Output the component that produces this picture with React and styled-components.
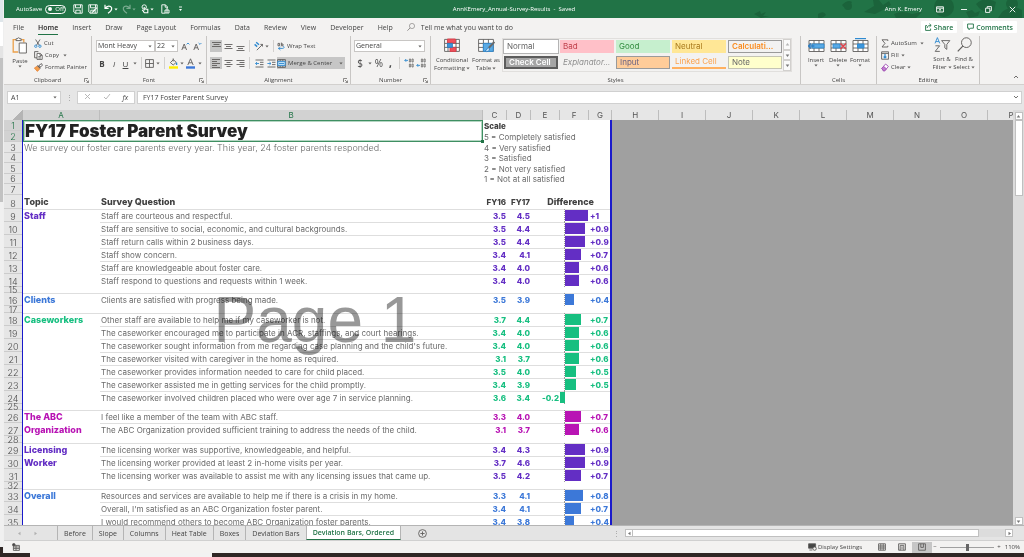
// libraries
import React from 'react';
import styled, { createGlobalStyle, css } from 'styled-components';

// tokens
const uiFont = "'Open Sans', 'Noto Sans', sans-serif";
const sheetFont = "Inter, 'Open Sans', sans-serif";

const color = {
  green: '#217346',
  darkGreen: '#1b633b',
  ribbon: '#f3f2f1',
  chrome: '#e6e6e6',
  line: '#c8c6c4',
  text: '#444444',
  pressed: '#c6c6c6',
  pageBlue: '#1a1acb',
  canvas: '#a0a0a0',
  icon: '#605e5c',
  iconBlue: '#2f8ad0',
};

const topicColor = {
  purple: '#632ec4',
  blue: '#3c78d8',
  green: '#17bf80',
  magenta: '#b814b4',
};

// data
const menuTabs = [
  'File',
  'Home',
  'Insert',
  'Draw',
  'Page Layout',
  'Formulas',
  'Data',
  'Review',
  'View',
  'Developer',
  'Help',
];

const cellStyles = [
  { name: 'Normal', variant: 'normal' },
  { name: 'Bad', variant: 'bad' },
  { name: 'Good', variant: 'good' },
  { name: 'Neutral', variant: 'neutral' },
  { name: 'Calculati...', variant: 'calculation' },
  { name: 'Check Cell', variant: 'check' },
  { name: 'Explanator...', variant: 'explanatory' },
  { name: 'Input', variant: 'input' },
  { name: 'Linked Cell', variant: 'linked' },
  { name: 'Note', variant: 'note' },
];

const columns = [
  { name: 'A', width: 77, selected: true },
  { name: 'B', width: 383, selected: true },
  { name: 'C', width: 24 },
  { name: 'D', width: 24 },
  { name: 'E', width: 29 },
  { name: 'F', width: 29 },
  { name: 'G', width: 23 },
  ...'HIJKLMNOP'.split('').map((name) => ({ name, width: 47 })),
];

const scaleRows = [
  { row: 4, height: 10, text: '3 = Satisfied' },
  { row: 5, height: 11, text: '2 = Not very satisfied' },
  { row: 6, height: 10, text: '1 = Not at all satisfied' },
  { row: 7, height: 11, text: '' },
];

// each question: text, FY16, FY17, difference
const topics = [
  {
    start: 9,
    names: ['Staff'],
    tone: 'purple',
    gap: 6,
    questions: [
      ['Staff are courteous and respectful.', '3.5', '4.5', 1],
      ['Staff are sensitive to social, economic, and cultural backgrounds.', '3.5', '4.4', 0.9],
      ['Staff return calls within 2 business days.', '3.5', '4.4', 0.9],
      ['Staff show concern.', '3.4', '4.1', 0.7],
      ['Staff are knowledgeable about foster care.', '3.4', '4.0', 0.6],
      ['Staff respond to questions and requests within 1 week.', '3.4', '4.0', 0.6],
    ],
  },
  {
    start: 16,
    names: ['Clients'],
    tone: 'blue',
    gap: 7,
    questions: [['Clients are satisfied with progress being made.', '3.5', '3.9', 0.4]],
  },
  {
    start: 18,
    names: ['Caseworkers'],
    tone: 'green',
    gap: 6,
    questions: [
      ['Other staff are available to help me if my caseworker is not.', '3.7', '4.4', 0.7],
      ['The caseworker encouraged me to participate in ACR, staffings, and court hearings.', '3.4', '4.0', 0.6],
      ["The caseworker sought information from me regarding case planning and the child's future.", '3.4', '4.0', 0.6],
      ['The caseworker visited with caregiver in the home as required.', '3.1', '3.7', 0.6],
      ['The caseworker provides information needed to care for child placed.', '3.5', '4.0', 0.5],
      ['The caseworker assisted me in getting services for the child promptly.', '3.4', '3.9', 0.5],
      ['The caseworker involved children placed who were over age 7 in service planning.', '3.6', '3.4', -0.2],
    ],
  },
  {
    start: 26,
    names: ['The ABC', 'Organization'],
    tone: 'magenta',
    gap: 7,
    questions: [
      ['I feel like a member of the team with ABC staff.', '3.3', '4.0', 0.7],
      ['The ABC Organization provided sufficient training to address the needs of the child.', '3.1', '3.7', 0.6],
    ],
  },
  {
    start: 29,
    names: ['Licensing', 'Worker'],
    tone: 'purple',
    gap: 7,
    questions: [
      ['The licensing worker was supportive, knowledgeable, and helpful.', '3.4', '4.3', 0.9],
      ['The licensing worker provided at least 2 in-home visits per year.', '3.7', '4.6', 0.9],
      ['The licensing worker was available to assist me with any licensing issues that came up.', '3.5', '4.2', 0.7],
    ],
  },
  {
    start: 33,
    names: ['Overall'],
    tone: 'blue',
    gap: 0,
    questions: [
      ['Resources and services are available to help me if there is a crisis in my home.', '3.3', '4.1', 0.8],
      ["Overall, I'm satisfied as an ABC Organization foster parent.", '3.4', '4.1', 0.7],
      ['I would recommend others to become ABC Organization foster parents.', '3.4', '3.8', 0.4],
    ],
  },
];

const sheetTabs = [
  'Before',
  'Slope',
  'Columns',
  'Heat Table',
  'Boxes',
  'Deviation Bars',
  'Deviation Bars, Ordered',
];

const GlobalStyle = createGlobalStyle`
  *, *::before, *::after {
    box-sizing: border-box;
  }
  body {
    margin: 0;
    background: ${color.chrome};
    color: ${color.text};
    font: 7px/9px ${uiFont};
    overflow: hidden;
  }
  button, input, select {
    margin: 0;
    padding: 0;
    border: 0;
    border-radius: 0;
    background: none;
    color: inherit;
    font: inherit;
  }
`;

// shell
const Desktop = styled.div`
  display: flex;
  flex-direction: column;
  height: 100vh;
`;

const Main = styled.div`
  display: flex;
  flex: 1;
  min-height: 0;
`;

const Behind = styled.div`
  flex: 0 0 4px;
  border-right: 1px solid #efefef;
  background: linear-gradient(
    #dfe6ea 0 22px,
    #ffffff 22px 46px,
    #e4e4e4 46px 58px,
    #c2c2c2 58px 202px,
    #f0f0f0 202px calc(100% - 6px),
    #2f2725 calc(100% - 6px)
  );
`;

const Window = styled.div`
  display: flex;
  flex: 1;
  flex-direction: column;
  min-width: 0;
`;

const Taskbar = styled.div`
  display: flex;
  flex: 0 0 4px;
  padding-left: 30px;
  background: #2f2725;
`;

const TaskSearch = styled.div`
  flex: 0 0 182px;
  background: #f2f2f2;
`;

// title bar
const TitleBar = styled.header`
  position: relative;
  display: grid;
  grid-template-columns: 1fr auto 1fr;
  align-items: center;
  flex: 0 0 18px;
  background: ${color.green};
  color: #ffffff;
  font-size: 6px;
`;

const TitleArt = styled.svg`
  position: absolute;
  top: 0;
  right: 0;
  width: 280px;
  height: 18px;
  fill: ${color.darkGreen};
`;

const QuickAccess = styled.div`
  display: flex;
  align-items: center;
  gap: 3px;
  padding-left: 12px;
`;

const Toggle = styled.label`
  display: flex;
  align-items: center;
  gap: 3px;
  margin-right: 3px;
`;

const ToggleTrack = styled.span`
  display: flex;
  align-items: center;
  gap: 3px;
  width: 21px;
  height: 9px;
  padding-left: 2px;
  border: 1px solid #ffffff;
  border-radius: 5px;
  line-height: 7px;

  &::before {
    width: 4px;
    height: 4px;
    border-radius: 50%;
    background: #ffffff;
    content: '';
  }
`;

const HiddenBox = styled.input`
  position: absolute;
  opacity: 0;
`;

const WindowActions = styled.div`
  position: relative;
  display: flex;
  align-items: center;
  justify-content: flex-end;
  gap: 12px;
  padding-right: 6px;
`;

const BarButton = styled.button`
  display: flex;
  align-items: center;
  justify-content: center;
  gap: 1px;
  height: 12px;
  min-width: ${(props) => props.$width || 12}px;
  opacity: ${(props) => (props.disabled ? 0.4 : 1)};
`;

// ribbon
const MenuBar = styled.nav`
  display: flex;
  flex: 0 0 18px;
  align-items: center;
  gap: 14px;
  padding: 0 7px 0 9px;
  background: ${color.ribbon};
`;

const MenuTab = styled.a`
  padding: 3px 0 2px;
  border-bottom: 1px solid ${(props) => (props.$active ? color.green : 'transparent')};
  color: ${(props) => (props.$active ? '#252423' : color.text)};
  font-weight: ${(props) => (props.$active ? 600 : 400)};
  text-decoration: none;
  white-space: nowrap;
`;

const TellMe = styled.label`
  display: flex;
  flex: 1;
  align-items: center;
  gap: 6px;
`;

const TellMeInput = styled.input`
  width: 100px;

  &::placeholder {
    color: ${color.text};
    opacity: 1;
  }
`;

const TopButton = styled.button`
  display: flex;
  align-items: center;
  gap: 2px;
  height: 12px;
  margin-left: ${(props) => (props.$tight ? '-8px' : '0')};
  padding: 0 4px;
  border-radius: 1px;
  background: #ffffff;
  color: ${color.green};
  font-weight: 600;
`;

const Ribbon = styled.div`
  display: flex;
  flex: 0 0 49px;
  border-bottom: 1px solid #d2d0ce;
  background: ${color.ribbon};
  font-size: 6px;
`;

const GroupBox = styled.section`
  position: relative;
  display: flex;
  flex-direction: column;
  min-width: ${(props) => props.$width}px;
  border-right: 1px solid ${color.line};
`;

const GroupBody = styled.div`
  display: flex;
  flex: 1;
  flex-direction: ${(props) => (props.$stack ? 'column' : 'row')};
  gap: ${(props) => props.$gap || 0}px;
  padding: ${(props) => props.$padding || '2px 4px 0'};
`;

const GroupLabel = styled.h2`
  margin: 0;
  font-size: 6px;
  font-weight: 400;
  line-height: 8px;
  text-align: center;
`;

const Launcher = styled.button`
  position: absolute;
  right: 2px;
  bottom: 1px;
  display: flex;
`;

const ToolRow = styled.div`
  display: flex;
  align-items: center;
  height: 12px;
`;

const ToolColumn = styled.div`
  display: flex;
  flex-direction: column;
`;

const Tool = styled.button`
  display: flex;
  align-items: center;
  justify-content: ${(props) => (props.$label ? 'flex-start' : 'center')};
  gap: 2px;
  min-width: ${(props) => props.$width || 12}px;
  height: 12px;
  background: ${(props) => (props.$pressed ? color.pressed : 'none')};
  white-space: nowrap;
`;

const Glyph = styled.span`
  font-size: ${(props) => props.$size || 10}px;
`;

const BigTool = styled.button`
  display: flex;
  flex-direction: column;
  align-items: center;
  justify-content: flex-start;
  min-width: ${(props) => props.$width || 22}px;
  line-height: 8px;
  white-space: nowrap;

  svg:first-child {
    margin-bottom: 3px;
  }
`;

const BigLabel = styled.span`
  display: flex;
  align-items: center;

  svg:last-child {
    margin: 0 0 0 1px;
  }
`;

const Divider = styled.span`
  width: 1px;
  height: 12px;
  margin: 0 3px;
  background: #d2d0ce;
`;

const SelectBox = styled.span`
  position: relative;
  display: flex;
  width: ${(props) => props.$width}px;
  height: 12px;
  border: 1px solid ${color.line};
  background: #ffffff;
  font-size: 7px;

  svg {
    position: absolute;
    top: 4px;
    right: 2px;
    pointer-events: none;
  }
`;

const Select = styled.select`
  width: 100%;
  padding-left: 1px;
  appearance: none;
  line-height: 10px;
`;

const Gallery = styled.div`
  display: flex;
  height: 34px;
  border: 1px solid #e1dfdd;
`;

const GalleryGrid = styled.div`
  display: grid;
  grid-template-columns: repeat(5, 54px);
  grid-auto-rows: 13px;
  gap: 3px 2px;
  padding: 1px;
`;

const variants = {
  normal: css`
    outline: 1px solid #b4b4b4;
    background: #ffffff;
  `,
  bad: css`
    background: #ffc0c8;
    color: #c0404c;
  `,
  good: css`
    background: #c6efce;
    color: #2f8a3c;
  `,
  neutral: css`
    background: #ffe796;
    color: #a97a1c;
  `,
  calculation: css`
    border: 1px solid #9a9a9a;
    background: #f2f2f2;
    color: #fa8b1e;
    font-weight: 600;
  `,
  check: css`
    border: 2px solid #5c5c5c;
    background: #a5a5a5;
    color: #ffffff;
    font-weight: 600;
  `,
  explanatory: css`
    color: #8f8f8f;
    font-style: italic;
  `,
  input: css`
    border: 1px solid #9a9a9a;
    background: #ffcc99;
    color: #6a6282;
  `,
  linked: css`
    border-bottom: 2px solid #ffb060;
    color: #fba24e;
  `,
  note: css`
    border: 1px solid #c4c4b4;
    background: #ffffcc;
  `,
};

const StyleItem = styled.button`
  overflow: hidden;
  padding-left: 3px;
  color: #666666;
  font-family: ${sheetFont};
  font-size: 8px;
  font-weight: 400;
  line-height: 9px;
  text-align: left;
  white-space: nowrap;
  ${(props) => variants[props.$variant]}
`;

const GalleryScroll = styled.div`
  display: flex;
  flex-direction: column;
  width: 8px;

  button {
    display: flex;
    flex: 1;
    align-items: center;
    justify-content: center;
    border: 1px solid #d2d0ce;
    background: #fafafa;
  }
`;

const RibbonEnd = styled.div`
  display: flex;
  flex: 1;
  align-items: flex-end;
  justify-content: flex-end;
  padding: 0 5px 2px 0;
`;

// formula bar
const FormulaBar = styled.div`
  display: flex;
  flex: 0 0 25px;
  gap: 2px;
  padding: 6px 2px 6px 3px;
  background: ${color.chrome};
`;

const NameBox = styled.span`
  position: relative;
  display: flex;
  width: 54px;
  border: 1px solid #d0d0d0;
  background: #ffffff;

  svg {
    position: absolute;
    top: 4px;
    right: 3px;
  }
`;

const TextInput = styled.input`
  width: 100%;
  padding-left: ${(props) => props.$indent}px;
`;

const Dots = styled.span`
  display: flex;
  align-items: center;
  justify-content: center;
  width: 12px;
  color: #9a9a9a;
`;

const FormulaButtons = styled.div`
  display: flex;
  align-items: center;
  justify-content: space-around;
  width: 58px;
  border: 1px solid #d0d0d0;
  background: #ffffff;
`;

const FormulaField = styled.span`
  display: flex;
  flex: 1;
  align-items: center;
  padding-right: 2px;
  border: 1px solid #d0d0d0;
  background: #ffffff;
`;

// sheet
const SheetArea = styled.div`
  display: flex;
  flex: 1;
  min-height: 0;
`;

const SheetView = styled.main`
  position: relative;
  flex: 1;
  overflow: hidden;
  background: ${color.canvas};
`;

const Sheet = styled.table`
  width: max-content;
  border-spacing: 0;
  table-layout: fixed;
  font-family: ${sheetFont};
  font-size: 8px;
  color: #6a6a6a;

  th,
  td {
    padding: 0;
    white-space: nowrap;
  }
`;

const ColumnHead = styled.th`
  height: 10px;
  border-right: 1px solid #bdbdbd;
  background: ${(props) => (props.$selected ? '#d2d2d2' : color.chrome)};
  color: ${(props) => (props.$selected ? color.green : '#555555')};
  font-weight: 400;
  line-height: 10px;
`;

const Corner = styled.td`
  background: linear-gradient(135deg, ${color.chrome} 65%, #b4b4b4 65%);
`;

const RowHead = styled.th`
  height: ${(props) => props.$height}px;
  border-right: 1px solid ${color.pageBlue};
  background: ${(props) => (props.$selected ? '#d2d2d2' : color.chrome)};
  box-shadow: inset 0 -1px #cccccc;
  color: ${(props) => (props.$selected ? color.green : '#4a4a4a')};
  font-size: 9px;
  font-weight: 300;
  line-height: ${(props) => Math.min(props.$height, 11)}px;
  vertical-align: bottom;
`;

const Cell = styled.td`
  background: #ffffff;
  font-size: ${(props) => props.$size || 8}px;
  font-weight: ${(props) => (props.$light ? 300 : 400)};
  line-height: 10px;
  text-align: left;
  box-shadow: ${(props) => (props.$ruled ? 'inset 0 1px #dedede' : 'none')};

  ${Sheet} & {
    padding: 0 1px;
  }

  &:last-child {
    border-right: 2px solid ${color.pageBlue};
  }
`;

const TitleCell = styled(Cell)`
  position: relative;
  color: #222222;
  font-size: 17px;
  font-weight: 900;
  line-height: 22px;

  ${Sheet} & {
    padding-left: 2px;
  }

  &::before {
    position: absolute;
    inset: 0;
    border: 1px solid #3f8f62;
    box-shadow: inset 0 0 0 1px #b5d6c3;
    content: '';
  }

  &::after {
    position: absolute;
    right: -1px;
    bottom: -1px;
    width: 3px;
    height: 3px;
    background: ${color.green};
    content: '';
  }
`;

const BoldCell = styled(Cell)`
  color: ${(props) => (props.$tone ? topicColor[props.$tone] : '#404040')};
  font-size: ${(props) => props.$size || 9}px;
  font-weight: 800;
  text-align: ${(props) => props.$align || 'left'};
`;

const Axis = styled.div`
  height: 13px;
  margin-left: 3px;
  padding-top: 1px;
  border-left: 1px dotted #9a9a9a;
`;

const Bar = styled.div`
  height: 11px;
  background: ${(props) => topicColor[props.$tone]};
`;

const Watermark = styled.div`
  position: absolute;
  inset: 4px auto 0 19px;
  display: flex;
  align-items: center;
  justify-content: center;
  width: 584px;
  color: #989898;
  font-family: 'Liberation Sans', sans-serif;
  font-size: 64px;
  line-height: 64px;
  mix-blend-mode: multiply;
  pointer-events: none;
`;

const VerticalScroll = styled.div`
  display: flex;
  flex: 0 0 11px;
  flex-direction: column;
  align-items: center;
  justify-content: space-between;
  padding-top: 2px;
  background: #dcdcdc;
`;

const VerticalThumb = styled.div`
  flex: 0 1 76px;
  width: 8px;
  margin-bottom: auto;
  border: 1px solid #c0c0c0;
  background: #ffffff;
`;

const ScrollButton = styled.button`
  display: flex;
  align-items: center;
  justify-content: center;
  width: 8px;
  height: 8px;
  border: 1px solid #c0c0c0;
  background: #ffffff;
`;

// footer
const TabStrip = styled.div`
  display: flex;
  flex: 0 0 15px;
  align-items: center;
  border-top: 1px solid #b4b4b4;
  background: #e4e4e4;
`;

const TabArrows = styled.div`
  display: flex;
  justify-content: center;
  gap: 11px;
  width: 53px;
  padding-right: 7px;
`;

const SheetTab = styled.button`
  height: 14px;
  padding: 0 6px;
  border-left: 1px solid #b4b4b4;
  white-space: nowrap;
  ${(props) =>
    props.$active &&
    css`
      border-right: 1px solid #b4b4b4;
      border-bottom: 1px solid ${color.green};
      background: #ffffff;
      color: ${color.green};
      font-weight: 600;
    `}
`;

const AddSheet = styled.button`
  display: flex;
  margin: 0 auto 0 17px;
`;

const HorizontalScroll = styled.div`
  display: flex;
  flex: 0 1 388px;
  align-items: center;
  margin: 0 11px 0 3px;
  background: #dcdcdc;
`;

const HorizontalThumb = styled.div`
  flex: 0 1 346px;
  height: 8px;
  margin-right: auto;
  border: 1px solid #c0c0c0;
  border-left: 0;
  background: #ffffff;
`;

const StatusBar = styled.footer`
  display: flex;
  flex: 0 0 12px;
  align-items: center;
  justify-content: flex-end;
  padding: 0 4px 0 4px;
  border-top: 1px solid #d0d0d0;
  background: ${color.ribbon};
  font-size: 6px;
`;

const MacroButton = styled.button`
  display: flex;
  margin-right: auto;
  padding-left: 4px;
`;

const DisplaySettings = styled.button`
  display: flex;
  align-items: center;
  gap: 1px;
  margin-right: 10px;
`;

const ViewButton = styled.button`
  display: flex;
  align-items: center;
  justify-content: center;
  width: 20px;
  height: 11px;
  background: ${(props) => (props.$active ? color.pressed : 'none')};
`;

const ZoomRange = styled.input`
  width: 54px;
  height: 10px;
  margin: 0 2px;
  appearance: none;

  &::-webkit-slider-runnable-track {
    height: 1px;
    background: #a0a0a0;
  }

  &::-webkit-slider-thumb {
    width: 3px;
    height: 7px;
    margin-top: -3px;
    appearance: none;
    background: #666666;
  }
`;

const ZoomLabel = styled.span`
  width: 18px;
  text-align: right;
`;

// icons
const Icon = ({ w = 10, h = 10, stroke = color.icon, children, ...rest }) => (
  <svg
    width={w}
    height={h}
    viewBox={`0 0 ${w} ${h}`}
    fill='none'
    stroke={stroke}
    strokeWidth='0.9'
    aria-hidden='true'
    {...rest}
  >
    {children}
  </svg>
);

const Caret = ({ fill = '#605e5c' }) => (
  <svg width='4' height='3' viewBox='0 0 4 3' fill={fill} aria-hidden='true'>
    <path d='M0.4 0.5h3.2L2 2.5z' />
  </svg>
);

const Arrow = ({ turn = 0, fill = '#777777' }) => (
  <svg width='5' height='5' viewBox='0 0 5 5' fill={fill} aria-hidden='true'>
    <path d='M0.7 1.5h3.6L2.5 4z' transform={`rotate(${turn} 2.5 2.5)`} />
  </svg>
);

const SaveIcon = ({ pen }) => (
  <Icon stroke='#ffffff'>
    <path d='M0.8 0.8h8.4v8.4H2L0.8 8z M2.5 0.8v3h5v-3 M2.8 9.2V6.2h4.4v3' />
    {pen && <path d='M4.2 8.6L8.8 3.6' strokeWidth='1.4' />}
  </Icon>
);

const UndoIcon = ({ flip }) => (
  <Icon w={9} stroke='#ffffff'>
    <g transform={flip ? 'translate(9 0) scale(-1 1)' : undefined} strokeWidth='1.2'>
      <path d='M1 0.8v3.6h3.6 M1.2 4.2C3 1.4 6.6 1.4 7.6 3.8C8.2 6 6.4 7.6 4 9.2' />
    </g>
  </Icon>
);

const TouchIcon = () => (
  <Icon w={8} stroke='#ffffff'>
    <circle cx='3.2' cy='3' r='2.2' />
    <path d='M3 8L1.2 5.8 M3.2 3v3.6 M4.4 5.2h2.4v3.6H3.4L2.2 7.4' strokeWidth='1.1' />
  </Icon>
);

const PreviewIcon = () => (
  <Icon w={9} stroke='#ffffff'>
    <path d='M4 9.2H0.8V0.8h3.6l2 2v1.6 M4.2 0.8v2.4h2' />
    <path d='M4 6h4v3H4z M6 4v5' />
  </Icon>
);

const CutIcon = () => (
  <Icon w={8} h={9}>
    <path d='M1.6 0.5L5.4 6.4 M6 0.5L2.4 6.4' />
    <circle cx='1.8' cy='7.2' r='1.2' stroke={color.iconBlue} />
    <circle cx='5.9' cy='7.2' r='1.2' stroke={color.iconBlue} />
  </Icon>
);

const CopyIcon = () => (
  <Icon w={9} h={9}>
    <path d='M3 6.8H0.6V0.6h3.8' />
    <path d='M3 2.4h3.2l2 1.8v4.2H3z M6 2.6v1.8h2 M4.3 5.6h2.6 M4.3 7h2.6' fill='#ffffff' />
  </Icon>
);

const PainterIcon = () => (
  <Icon w={9} h={9}>
    <path d='M5.2 2.2L7.6 0.6L8.4 2.4L6.2 4z' fill='#ffffff' />
    <path d='M3.4 2.6L6.4 5.6' strokeWidth='1.4' />
    <path d='M3 3.4L0.4 5L3.4 8.4L5.6 6z' fill='#f5a14a' stroke='#e8853a' />
  </Icon>
);

const PasteIcon = () => (
  <Icon w={16} h={17}>
    <path d='M6 15H1.2V2.6h10.6v3' stroke='#eba04a' strokeWidth='1.3' />
    <path d='M4 3.6V1.8h1.4C5.6 0.4 7.6 0.4 7.8 1.8h1.4v1.8z' fill='#ffffff' />
    <path d='M7.2 6h7.2v10H7.2z' fill='#ffffff' />
  </Icon>
);

const LinesIcon = ({ rows, w = 9 }) => (
  <Icon w={w} h={9}>
    {rows.map(([x1, x2, y]) => (
      <path key={y} d={`M${x1} ${y}H${x2}`} />
    ))}
  </Icon>
);

const alignRows = {
  top: [[0, 9, 0.5], [1.5, 7.5, 2.5], [0, 9, 4.5]],
  middle: [[0.5, 8.5, 2.5], [2, 7, 4.5], [0.5, 8.5, 6.5]],
  bottom: [[0.5, 8.5, 4.5], [2, 7, 6.5], [0.5, 8.5, 8.5]],
  left: [[0, 8, 0.5], [0, 5, 2.5], [0, 8, 4.5], [0, 5, 6.5], [0, 8, 8.5]],
  center: [[0.5, 8.5, 1.5], [2.5, 6.5, 3.5], [0.5, 8.5, 5.5], [2.5, 6.5, 7.5]],
  right: [[0.5, 8.5, 1.5], [3.5, 8.5, 3.5], [0.5, 8.5, 5.5], [3.5, 8.5, 7.5]],
};

const BordersIcon = () => (
  <Icon w={9} h={9}>
    <path d='M0.6 0.6h7.8v7.8H0.6z M4.5 0.6v7.8 M0.6 4.5h7.8' />
  </Icon>
);

const FillColorIcon = () => (
  <Icon w={9} h={11}>
    <path d='M1.4 4.6L4.4 1.6L7.2 4.4L4.2 7z M4.2 0.4v3' />
    <path d='M7.6 4.6v2.4' stroke={color.iconBlue} strokeWidth='1.3' />
    <path d='M0 9.5h9' stroke='#ffee00' strokeWidth='2.4' />
  </Icon>
);

const FontColorIcon = () => (
  <Icon w={9} h={11}>
    <path d='M1.8 7L4.5 0.8L7.2 7 M2.8 4.8h3.4' />
    <path d='M0 9.5h9' stroke='#3c78d8' strokeWidth='2.4' />
  </Icon>
);

const FontSizeIcon = ({ down }) => (
  <Icon w={9} h={9}>
    <path d='M0.8 8L3.2 2L5.6 8 M1.7 5.8h3' />
    <path d={down ? 'M5.6 1L7 2.4L8.4 1' : 'M5.6 2.4L7 1L8.4 2.4'} stroke={color.iconBlue} />
  </Icon>
);

const OrientationIcon = () => (
  <Icon w={9}>
    <path d='M2.8 9.2L8.6 3.4 M8.6 3.4H6.4 M8.6 3.4v2.2' />
    <path d='M0.6 3.4L3.2 5.6 M2.2 1.2L5 3.8' stroke={color.iconBlue} strokeWidth='1.4' />
  </Icon>
);

const WrapIcon = () => (
  <Icon w={8} h={9}>
    <path d='M1 1.4h1.6v2.4H1z M4.4 0.6v3.2h1.6V2H4.4' />
    <path d='M1 6.4h4.8c1.6 0 1.6-2 0.4-2 M3.4 5L1.8 6.5L3.4 8' stroke={color.iconBlue} />
  </Icon>
);

const IndentIcon = ({ more }) => (
  <Icon w={9} h={9}>
    <path d='M0.5 1h8 M5 3.3h3.5 M5 5.6h3.5 M0.5 8h8' />
    <path
      d={more ? 'M0.4 4.5h3.4 M2.4 3L4 4.5L2.4 6' : 'M0.6 4.5H4 M2 3L0.6 4.5L2 6'}
      stroke={color.iconBlue}
    />
  </Icon>
);

const MergeIcon = () => (
  <Icon w={9} h={9}>
    <path d='M0.6 0.6h7.8v7.8H0.6z M3.2 0.6v1.6 M5.8 0.6v1.6 M3.2 6.8v1.6 M5.8 6.8v1.6' />
    <path d='M0.8 2.4h7.4v4.2H0.8z' fill='#bfe0f7' stroke={color.iconBlue} />
    <path d='M2 4.5h5' stroke={color.iconBlue} />
  </Icon>
);

const DecimalIcon = ({ less }) => (
  <Icon w={10} h={10}>
    <path d='M0.8 2.4h3.2 M2.2 1L0.8 2.4L2.2 3.8' stroke={color.iconBlue} transform={less ? 'translate(0 5)' : undefined} />
    <path d='M5.4 1h1.2v3H5.4z M8 1h1.2v3H8z M5.4 6h1.2v3H5.4z M8 6h1.2v3H8z' strokeWidth='0.7' />
  </Icon>
);

const ConditionalIcon = () => (
  <Icon w={16} h={15}>
    <path d='M0.6 1.4h14.8v12H0.6z M0.6 5.4h14.8 M0.6 9.4h14.8 M4 1.4v12 M12 1.4v12' fill='#ffffff' />
    <path d='M3.4 1h8v4H3.4z M6 9.4h6v4H6z' fill='#f0505c' stroke='#d63e4a' />
    <path d='M3.4 5.4h5v4h-5z' fill='#3c96dc' stroke='#2f7dc0' />
  </Icon>
);

const FormatTableIcon = () => (
  <Icon w={17} h={15}>
    <path d='M0.6 1.4h14.8v12H0.6z M0.6 5.4h14.8 M0.6 9.4h14.8 M5.4 1.4v12 M10.4 1.4v12' fill='#ffffff' />
    <path d='M5.4 5.4h9.8v8H5.4z' fill='#5aaae4' stroke={color.iconBlue} />
    <path d='M16.4 4L10.4 10.2' strokeWidth='2' stroke='#6a6a6a' />
    <path d='M10.6 9.8c-2 0-1.6 2.6-3.6 3.4c2 1 4.6 0.2 4.6-2.2z' fill='#bfe0f7' stroke='#2f7dc0' />
  </Icon>
);

const CellsIcon = ({ kind }) => (
  <Icon w={17} h={15}>
    <path d='M1 2.5h15v11H1z M1 6h15 M1 10h15 M6 2.5v11 M11 2.5v11' fill='#ffffff' />
    {kind === 'insert' && (
      <>
        <path d='M4 6h12v4H4z' fill='#5aaae4' stroke={color.iconBlue} />
        <path d='M0.4 8h6 M3 5.5L0.4 8L3 10.5' stroke='#2f7dc0' strokeWidth='1.3' />
      </>
    )}
    {kind === 'delete' && (
      <>
        <path d='M3 6h7v4H3z' fill='#5aaae4' stroke={color.iconBlue} />
        <path d='M10.5 5.4L16 11 M16 5.4L10.5 11' stroke='#e0424c' strokeWidth='1.4' />
      </>
    )}
    {kind === 'format' && (
      <>
        <path d='M5.5 6H12v4H5.5z' fill='#3c96dc' stroke={color.iconBlue} />
        <path d='M3 0.6h11' stroke={color.iconBlue} strokeWidth='1.2' />
      </>
    )}
  </Icon>
);

const SumIcon = () => (
  <Icon w={8} h={9}>
    <path d='M6.8 2V0.8H1l3 3.6L1 8h5.8V6.8' />
  </Icon>
);

const FillIcon = () => (
  <Icon w={8} h={9}>
    <path d='M0.6 0.8h7v7.4h-7z M0.6 2.4h7' />
    <path d='M4 3v4 M2.6 5.6L4 7L5.4 5.6' stroke={color.iconBlue} strokeWidth='1.2' />
  </Icon>
);

const ClearIcon = () => (
  <Icon w={8} h={9}>
    <path d='M0.8 5.4L4.6 1L7.4 3.4L3.8 7.8H2.4z' fill='#ffffff' stroke='#a050b4' />
    <path d='M0.8 5.4L2.6 3.4L5.4 5.8L3.8 7.8H2.4z' fill='#c07cd0' stroke='#a050b4' />
  </Icon>
);

const SortIcon = () => (
  <Icon w={17} h={15}>
    <path d='M1 6.4L3.4 0.6L5.8 6.4 M1.8 4.6h3.2' stroke={color.iconBlue} />
    <path d='M1.4 8.8h4.2L1.2 14.4h4.6' />
    <path d='M7.6 3.6h8.2l-3 3.8v5l-2-1.6V7.4z' />
  </Icon>
);

const FindIcon = ({ size = 15 }) => (
  <svg width={size} height={size} viewBox='0 0 16 16' fill='none' stroke={color.icon} aria-hidden='true'>
    <circle cx='10' cy='6' r='5.2' />
    <path d='M6.2 9.8L0.8 15.4' strokeWidth='1.3' />
  </svg>
);

const ShareIcon = () => (
  <Icon w={7} h={8} stroke={color.green}>
    <path d='M2 2.6H0.6v4.8h5V5.6 M2.2 5c0-2 1.4-2.6 3.6-2.6 M4.4 0.8l1.8 1.6L4.4 4' />
  </Icon>
);

const CommentIcon = () => (
  <Icon w={7} h={8} stroke={color.green}>
    <path d='M0.6 1h5.8v4.2H3.4L2 6.8V5.2H0.6z' />
  </Icon>
);

const LauncherIcon = () => (
  <Icon w={5} h={5}>
    <path d='M0.5 4V0.5H4 M2 2l2.4 2.4 M4.5 2.5v2h-2' strokeWidth='0.7' />
  </Icon>
);

const DropTool = ({ label, width, disabled, children }) => (
  <>
    <Tool aria-label={label} $width={width} disabled={disabled}>
      {children}
    </Tool>
    <Tool aria-label={`${label} options`} $width={7}>
      <Caret />
    </Tool>
  </>
);

const Group = ({ title, width, launcher, children, ...body }) => (
  <GroupBox $width={width}>
    <GroupBody {...body}>{children}</GroupBody>
    <GroupLabel>{title}</GroupLabel>
    {launcher && (
      <Launcher aria-label={`${title} settings`}>
        <LauncherIcon />
      </Launcher>
    )}
  </GroupBox>
);

const Title = () => (
  <TitleBar>
    <TitleArt viewBox='0 0 280 18' aria-hidden='true'>
      <path d='M10 14l6-3 1 3 5-2-3 4 6 0-8 2zM74 14q6-4 8 1q-4 4-8 3zM98 5q6-6 10-3l-3 5q-5 2-7-2zM120 12l10-6-1-6h6l4 5 6-4 2 4-8 5-8 4zM150 14q8-4 18 0l10-2-6 6h-20z' />
      <circle cx='104' cy='6' r='4' />
      <circle cx='200' cy='7' r='10' />
      <path d='M222 12l6-2 3 3 5-2-2 5-9 2zM232 4q8-8 20-2l-2 8q-10 6-18-6zM258 12q10-8 20-2v8h-24z' />
      <circle cx='268' cy='4' r='6' />
    </TitleArt>
    <QuickAccess>
      <Toggle>
        AutoSave
        <HiddenBox type='checkbox' />
        <ToggleTrack>Off</ToggleTrack>
      </Toggle>
      <BarButton aria-label='Save'>
        <SaveIcon />
      </BarButton>
      <BarButton aria-label='Save as'>
        <SaveIcon pen />
      </BarButton>
      <BarButton aria-label='Undo' $width={17}>
        <UndoIcon />
        <Caret fill='#ffffff' />
      </BarButton>
      <BarButton aria-label='Redo' $width={14} disabled>
        <UndoIcon flip />
        <Caret fill='#ffffff' />
      </BarButton>
      <BarButton aria-label='Touch mode' $width={17}>
        <TouchIcon />
        <Caret fill='#ffffff' />
      </BarButton>
      <BarButton aria-label='Print preview'>
        <PreviewIcon />
      </BarButton>
      <BarButton aria-label='Customize toolbar'>
        <Icon w={5} h={6} stroke='#ffffff'>
          <path d='M1 1h3' />
          <path d='M1 3h3L2.5 5z' fill='#ffffff' stroke='none' />
        </Icon>
      </BarButton>
    </QuickAccess>
    <span>AnnKEmery_Annual-Survey-Results&nbsp; -&nbsp; Saved</span>
    <WindowActions>
      <span>Ann K. Emery</span>
      <BarButton aria-label='Ribbon display'>
        <Icon w={8} h={7} stroke='#ffffff'>
          <path d='M0.6 0.8h6.8v5.2H0.6z M0.6 2.2h6.8 M4 5.4V3.2 M3 4.2l1-1 1 1' />
        </Icon>
      </BarButton>
      <BarButton aria-label='Minimize'>
        <Icon w={6} h={6} stroke='#ffffff'>
          <path d='M0 3.5h6' />
        </Icon>
      </BarButton>
      <BarButton aria-label='Restore'>
        <Icon w={7} h={7} stroke='#ffffff'>
          <path d='M0.6 2.2h4.2v4.2H0.6z M2.2 2V0.6h4.2v4.2H5' />
        </Icon>
      </BarButton>
      <BarButton aria-label='Close'>
        <Icon w={7} h={7} stroke='#ffffff'>
          <path d='M0.8 0.8l5.4 5.4 M6.2 0.8L0.8 6.2' />
        </Icon>
      </BarButton>
    </WindowActions>
  </TitleBar>
);

const Menu = () => (
  <MenuBar>
    {menuTabs.map((name) => (
      <MenuTab key={name} href='#' $active={name === 'Home'}>
        {name}
      </MenuTab>
    ))}
    <TellMe>
      <FindIcon size={8} />
      <TellMeInput aria-label='Tell me' placeholder='Tell me what you want to do' />
    </TellMe>
    <TopButton>
      <ShareIcon />
      Share
    </TopButton>
    <TopButton $tight>
      <CommentIcon />
      Comments
    </TopButton>
  </MenuBar>
);

const RibbonBar = () => (
  <Ribbon>
    <Group title='Clipboard' width={88} launcher $gap={2} $padding='1px 3px 0 4px'>
      <BigTool $width={24}>
        <PasteIcon />
        Paste
        <Caret />
      </BigTool>
      <ToolColumn>
        <Tool $label>
          <CutIcon />
          Cut
        </Tool>
        <Tool $label>
          <CopyIcon />
          Copy&nbsp;
          <Caret />
        </Tool>
        <Tool $label>
          <PainterIcon />
          Format Painter
        </Tool>
      </ToolColumn>
    </Group>
    <Group title='Font' width={114} launcher $stack $gap={5} $padding='4px 3px 0 4px'>
      <ToolRow>
        <SelectBox $width={59}>
          <Select aria-label='Font name'>
            <option>Mont Heavy</option>
          </Select>
          <Caret />
        </SelectBox>
        <SelectBox $width={23}>
          <Select aria-label='Font size'>
            <option>22</option>
          </Select>
          <Caret />
        </SelectBox>
        <Tool aria-label='Increase font size' $width={14}>
          <FontSizeIcon />
        </Tool>
        <Tool aria-label='Decrease font size' $width={10}>
          <FontSizeIcon down />
        </Tool>
      </ToolRow>
      <ToolRow>
        <Tool>
          <Glyph $size={8}>
            <b>B</b>
          </Glyph>
        </Tool>
        <Tool>
          <Glyph $size={8}>
            <i>I</i>
          </Glyph>
        </Tool>
        <DropTool label='Underline' width={11}>
          <Glyph $size={8}>
            <u>U</u>
          </Glyph>
        </DropTool>
        <Divider />
        <DropTool label='Borders' width={9}>
          <BordersIcon />
        </DropTool>
        <Divider />
        <DropTool label='Fill color' width={10}>
          <FillColorIcon />
        </DropTool>
        <DropTool label='Font color' width={11}>
          <FontColorIcon />
        </DropTool>
      </ToolRow>
    </Group>
    <Group title='Alignment' width={144} launcher $stack $gap={5} $padding='4px 3px 0'>
      <ToolRow>
        <Tool aria-label='Top align' $pressed>
          <LinesIcon rows={alignRows.top} />
        </Tool>
        <Tool aria-label='Middle align'>
          <LinesIcon rows={alignRows.middle} />
        </Tool>
        <Tool aria-label='Bottom align'>
          <LinesIcon rows={alignRows.bottom} />
        </Tool>
        <Divider />
        <DropTool label='Orientation' width={10}>
          <OrientationIcon />
        </DropTool>
        <Divider />
        <Tool $label>
          <WrapIcon />
          Wrap Text
        </Tool>
      </ToolRow>
      <ToolRow>
        <Tool aria-label='Align left' $pressed>
          <LinesIcon rows={alignRows.left} />
        </Tool>
        <Tool aria-label='Center'>
          <LinesIcon rows={alignRows.center} />
        </Tool>
        <Tool aria-label='Align right'>
          <LinesIcon rows={alignRows.right} />
        </Tool>
        <Divider />
        <Tool aria-label='Decrease indent'>
          <IndentIcon />
        </Tool>
        <Tool aria-label='Increase indent'>
          <IndentIcon more />
        </Tool>
        <Tool $label $pressed $width={60}>
          <MergeIcon />
          Merge &amp; Center
        </Tool>
        <Tool aria-label='Merge options' $pressed $width={8}>
          <Caret />
        </Tool>
      </ToolRow>
    </Group>
    <Group title='Number' width={78} launcher $stack $gap={5} $padding='4px 3px 0'>
      <ToolRow>
        <SelectBox $width={71}>
          <Select aria-label='Number format'>
            <option>General</option>
          </Select>
          <Caret />
        </SelectBox>
      </ToolRow>
      <ToolRow>
        <DropTool label='Accounting format' width={12}>
          <Glyph>$</Glyph>
        </DropTool>
        <Tool>
          <Glyph>%</Glyph>
        </Tool>
        <Tool aria-label='Comma style' $width={11}>
          <Glyph>
            <b>,</b>
          </Glyph>
        </Tool>
        <Divider />
        <Tool aria-label='Increase decimal'>
          <DecimalIcon />
        </Tool>
        <Tool aria-label='Decrease decimal'>
          <DecimalIcon less />
        </Tool>
      </ToolRow>
    </Group>
    <Group title='Styles' width={370} $padding='2px 3px 0'>
      <BigTool $width={36}>
        <ConditionalIcon />
        <span>Conditional</span>
        <BigLabel>
          Formatting
          <Caret />
        </BigLabel>
      </BigTool>
      <BigTool $width={32}>
        <FormatTableIcon />
        <span>Format as</span>
        <BigLabel>
          Table
          <Caret />
        </BigLabel>
      </BigTool>
      <Gallery>
        <GalleryGrid>
          {cellStyles.map(({ name, variant }) => (
            <StyleItem key={variant} $variant={variant}>
              {name}
            </StyleItem>
          ))}
        </GalleryGrid>
        <GalleryScroll>
          <button aria-label='Previous styles'>
            <Arrow turn={180} fill='#b4b4b4' />
          </button>
          <button aria-label='Next styles'>
            <Arrow />
          </button>
          <button aria-label='All styles'>
            <Arrow />
          </button>
        </GalleryScroll>
      </Gallery>
    </Group>
    <Group title='Cells' width={76} $padding='2px 4px 0'>
      {['Insert', 'Delete', 'Format'].map((name) => (
        <BigTool key={name} $width={22}>
          <CellsIcon kind={name.toLowerCase()} />
          {name}
          <Caret />
        </BigTool>
      ))}
    </Group>
    <Group title='Editing' width={103} $padding='1px 4px 0'>
      <ToolColumn>
        <Tool $label $width={50}>
          <SumIcon />
          AutoSum&nbsp;
          <Caret />
        </Tool>
        <Tool $label>
          <FillIcon />
          Fill
          <Caret />
        </Tool>
        <Tool $label>
          <ClearIcon />
          Clear
          <Caret />
        </Tool>
      </ToolColumn>
      <BigTool>
        <SortIcon />
        <span>Sort &amp;</span>
        <BigLabel>
          Filter
          <Caret />
        </BigLabel>
      </BigTool>
      <BigTool>
        <FindIcon />
        <span>Find &amp;</span>
        <BigLabel>
          Select
          <Caret />
        </BigLabel>
      </BigTool>
    </Group>
    <RibbonEnd>
      <button aria-label='Collapse ribbon'>
        <Icon w={6} h={4}>
          <path d='M1 3l2-2 2 2' />
        </Icon>
      </button>
    </RibbonEnd>
  </Ribbon>
);

const Formula = () => (
  <FormulaBar>
    <NameBox>
      <TextInput aria-label='Name box' defaultValue='A1' $indent={3} />
      <Caret />
    </NameBox>
    <Dots>⋮</Dots>
    <FormulaButtons>
      <button aria-label='Cancel'>
        <Icon w={7} h={7} stroke='#b0b0b0'>
          <path d='M1 1l5 5 M6 1L1 6' />
        </Icon>
      </button>
      <button aria-label='Enter'>
        <Icon w={8} h={7} stroke='#b0b0b0'>
          <path d='M1 4l2 2 4-5' />
        </Icon>
      </button>
      <button aria-label='Insert function'>
        <i>fx</i>
      </button>
    </FormulaButtons>
    <FormulaField>
      <TextInput aria-label='Formula' defaultValue='FY17 Foster Parent Survey' $indent={5} />
      <Icon w={6} h={5}>
        <path d='M1 1l2 2 2-2' />
      </Icon>
    </FormulaField>
  </FormulaBar>
);

const QuestionRow = ({ topic, question, index }) => {
  const [text, fy16, fy17, diff] = question;
  const { tone } = topic;
  const width = Math.round(Math.abs(diff) * 22.5);
  return (
    <tr>
      <RowHead $height={13}>{topic.start + index}</RowHead>
      <BoldCell $tone={tone} $ruled={index === 0}>
        {topic.names[index]}
      </BoldCell>
      <Cell $ruled>{text}</Cell>
      <BoldCell $ruled $tone={tone} $size={8} $align='right'>
        {fy16}
      </BoldCell>
      <BoldCell $ruled $tone={tone} $size={8} $align='right'>
        {fy17}
      </BoldCell>
      <BoldCell $ruled $tone={tone} $size={8} $align='right'>
        {diff < 0 ? diff : null}
      </BoldCell>
      <Cell $ruled>
        <Axis>
          <Bar $tone={tone} style={{ width, marginLeft: diff < 0 ? -width : 0 }} />
        </Axis>
      </Cell>
      <BoldCell $ruled $tone={tone} $size={8}>
        {diff > 0 ? `+${diff}` : null}
      </BoldCell>
    </tr>
  );
};

const Worksheet = () => (
  <Sheet>
    <colgroup>
      <col width='19' />
      {columns.map(({ name, width }) => (
        <col key={name} width={width} />
      ))}
    </colgroup>
    <thead>
      <tr>
        <Corner />
        {columns.map(({ name, selected }) => (
          <ColumnHead key={name} $selected={selected}>
            {name}
          </ColumnHead>
        ))}
      </tr>
    </thead>
    <tbody>
      <tr>
        <RowHead $height={11} $selected>
          1
        </RowHead>
        <TitleCell colSpan={2} rowSpan={2}>
          FY17 Foster Parent Survey
        </TitleCell>
        <BoldCell colSpan={5} $size={8}>
          Scale
        </BoldCell>
      </tr>
      <tr>
        <RowHead $height={11} $selected>
          2
        </RowHead>
        <Cell colSpan={5}>5 = Completely satisfied</Cell>
      </tr>
      <tr>
        <RowHead $height={11}>3</RowHead>
        <Cell colSpan={2} $size={9} $light>
          We survey our foster care parents every year. This year, 24 foster parents responded.
        </Cell>
        <Cell colSpan={5}>4 = Very satisfied</Cell>
      </tr>
      {scaleRows.map(({ row, height, text }) => (
        <tr key={row}>
          <RowHead $height={height}>{row}</RowHead>
          <Cell colSpan={2} />
          <Cell colSpan={5}>{text}</Cell>
        </tr>
      ))}
      <tr>
        <RowHead $height={14}>8</RowHead>
        <BoldCell>Topic</BoldCell>
        <BoldCell>Survey Question</BoldCell>
        <BoldCell $size={8} $align='right'>
          FY16
        </BoldCell>
        <BoldCell $size={8} $align='right'>
          FY17
        </BoldCell>
        <BoldCell colSpan={3} $align='center'>
          Difference
        </BoldCell>
      </tr>
      {topics.map((topic) => (
        <React.Fragment key={topic.start}>
          {topic.questions.map((question, index) => (
            <QuestionRow key={question[0]} topic={topic} question={question} index={index} />
          ))}
          {topic.gap > 0 && (
            <tr>
              <RowHead $height={topic.gap}>{topic.start + topic.questions.length}</RowHead>
              <Cell colSpan={7} />
            </tr>
          )}
        </React.Fragment>
      ))}
    </tbody>
  </Sheet>
);

const App = () => (
  <Desktop>
    <GlobalStyle />
    <Main>
      <Behind />
      <Window>
        <Title />
        <Menu />
        <RibbonBar />
        <Formula />
        <SheetArea>
          <SheetView>
            <Worksheet />
            <Watermark>Page 1</Watermark>
          </SheetView>
          <VerticalScroll>
            <ScrollButton aria-label='Scroll up'>
              <Arrow turn={180} />
            </ScrollButton>
            <VerticalThumb />
            <ScrollButton aria-label='Scroll down'>
              <Arrow />
            </ScrollButton>
          </VerticalScroll>
        </SheetArea>
        <TabStrip>
          <TabArrows>
            <Arrow turn={90} fill='#b0b0b0' />
            <Arrow turn={-90} fill='#b0b0b0' />
          </TabArrows>
          {sheetTabs.map((name, index) => (
            <SheetTab key={name} $active={index === sheetTabs.length - 1}>
              {name}
            </SheetTab>
          ))}
          <AddSheet aria-label='New sheet'>
            <Icon w={9} h={9}>
              <circle cx='4.5' cy='4.5' r='3.9' />
              <path d='M4.5 2.4v4.2 M2.4 4.5h4.2' />
            </Icon>
          </AddSheet>
          <Dots>⋮</Dots>
          <HorizontalScroll>
            <ScrollButton aria-label='Scroll left'>
              <Arrow turn={90} />
            </ScrollButton>
            <HorizontalThumb />
            <ScrollButton aria-label='Scroll right'>
              <Arrow turn={-90} />
            </ScrollButton>
          </HorizontalScroll>
        </TabStrip>
        <StatusBar>
          <MacroButton aria-label='Record macro'>
            <Icon w={8} h={8}>
              <path d='M1.4 2.4h6v5h-6z M1.4 4h6 M1.4 5.6h6 M4 2.4v5' />
              <circle cx='1.8' cy='1.8' r='1.3' fill='#444444' />
            </Icon>
          </MacroButton>
          <DisplaySettings>
            <Icon w={9} h={8}>
              <path d='M0.6 0.8h7v4.4h-7z M1.4 7h3' fill='#444444' />
              <circle cx='6.6' cy='5.6' r='1.7' fill='#f3f2f1' />
            </Icon>
            Display Settings
          </DisplaySettings>
          <ViewButton aria-label='Normal view'>
            <Icon w={8} h={8}>
              <path d='M0.6 0.8h6.8v6.4H0.6z M0.6 3h6.8 M0.6 5h6.8 M2.8 0.8v6.4 M5.2 0.8v6.4' />
            </Icon>
          </ViewButton>
          <ViewButton aria-label='Page layout view'>
            <Icon w={8} h={8}>
              <path d='M0.6 0.8h6.8v6.4H0.6z M2.2 2.4h3.6v4.8 M2.2 2.4v4.8 M4 3.4v3' />
            </Icon>
          </ViewButton>
          <ViewButton aria-label='Page break view' $active>
            <Icon w={8} h={8}>
              <path d='M0.6 0.8h6.8v6.4H0.6z M2.8 0.8v3.6h2.6V0.8' />
            </Icon>
          </ViewButton>
          <Tool aria-label='Zoom out' $width={6}>
            −
          </Tool>
          <ZoomRange type='range' min='10' max='210' defaultValue='110' aria-label='Zoom' />
          <Tool aria-label='Zoom in' $width={6}>
            +
          </Tool>
          <ZoomLabel>110%</ZoomLabel>
        </StatusBar>
      </Window>
    </Main>
    <Taskbar>
      <TaskSearch />
    </Taskbar>
  </Desktop>
);

export default App;
